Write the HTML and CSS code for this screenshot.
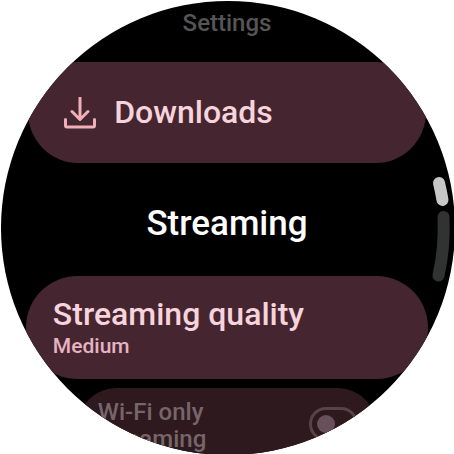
FILE: index.html
```html
<!DOCTYPE html>
<html lang="en">
<head>
<meta charset="utf-8">
<meta name="viewport" content="width=device-width, initial-scale=1">
<title>Settings</title>
<link rel="stylesheet" href="styles.css">
</head>
<body>
<main class="watch">
  <h1 class="title">Settings</h1>
  <button class="card card-downloads" type="button">
    <svg class="icon" viewBox="0 0 32 32" aria-hidden="true">
      <path d="M16 1v21M8 14.500l8 8 8-8M1.500 22.500v6a1.500 1.500 0 0 0 1.500 1.500h26a1.500 1.500 0 0 0 1.500-1.500v-6"/>
    </svg>
    <span class="label">Downloads</span>
  </button>
  <h2 class="section">Streaming</h2>
  <button class="card card-quality" type="button">
    <span class="label">Streaming quality</span>
    <span class="value">Medium</span>
  </button>
  <div class="card card-wifi">
    <label class="wifi-label" for="wifi">Wi-Fi only streaming</label>
    <input class="switch" id="wifi" type="checkbox" role="switch">
  </div>
  <svg class="scroll" viewBox="0 0 454 454" aria-hidden="true">
    <path class="thumb" d="M438 182A216 216 0 0 1 441.500 199"/>
    <path class="track" d="M442.500 216A216 216 0 0 1 437.500 274.500"/>
  </svg>
</main>
</body>
</html>
```
FILE: styles.css
```css
* {
  box-sizing: border-box;
}

html {
  height: 100%;
  overflow: hidden;
  background: #fff;
}

body {
  margin: 0;
  font-family: Roboto, "Liberation Sans", sans-serif;
  font-weight: 500;
}

.watch {
  position: relative;
  display: flex;
  flex-direction: column;
  align-items: center;
  width: 100%;
  aspect-ratio: 1;
  padding-right: 2px;
  overflow: hidden;
  background: #000;
  clip-path: circle(50% at 50% 50%);
  transform: translate(1px, 1px);
}

.title {
  margin: 8px 0 25px;
  font-size: 24px;
  line-height: 28px;
  font-weight: 500;
  color: #555;
}

.card {
  display: flex;
  flex-shrink: 0;
  border: 0;
  border-radius: 52px;
  background: #452630;
  color: #f7d3dc;
  font: inherit;
  text-align: left;
}

.card-downloads {
  align-items: center;
  gap: 18px;
  width: 88%;
  padding: 32px 36px;
}

.icon {
  width: 32px;
  height: 32px;
  fill: none;
  stroke: #efb0b7;
  stroke-width: 3;
  stroke-linecap: round;
  stroke-linejoin: round;
}

.label {
  font-size: 32px;
  line-height: 37px;
}

.section {
  margin: 42px 0 34px;
  font-size: 35px;
  line-height: 37px;
  font-weight: 500;
  color: #fff;
}

.card-quality {
  flex-direction: column;
  align-items: flex-start;
  width: 89%;
  padding: 20px 27px;
}

.value {
  font-size: 21px;
  line-height: 26px;
  color: #e6b3c1;
}

.card-wifi {
  align-items: center;
  justify-content: space-between;
  width: 66%;
  margin-top: 9px;
  padding: 11px 18px 11px 20px;
  background: #2d191e;
  color: #77656a;
}

.wifi-label {
  width: 130px;
  font-size: 24px;
  line-height: 27px;
}

.switch {
  flex-shrink: 0;
  width: 49px;
  height: 34px;
  margin: 0 0 4px;
  padding: 5px;
  appearance: none;
  border: 3px solid #59434a;
  border-radius: 17px;
}

.switch::before {
  content: "";
  display: block;
  width: 18px;
  height: 18px;
  border-radius: 50%;
  background: #67505a;
}

.scroll {
  position: absolute;
  inset: 0;
  width: 100%;
  height: 100%;
  fill: none;
  stroke-width: 12;
  stroke-linecap: round;
  pointer-events: none;
}

.thumb {
  stroke: #c7c7c7;
}

.track {
  stroke: #303332;
}
```
